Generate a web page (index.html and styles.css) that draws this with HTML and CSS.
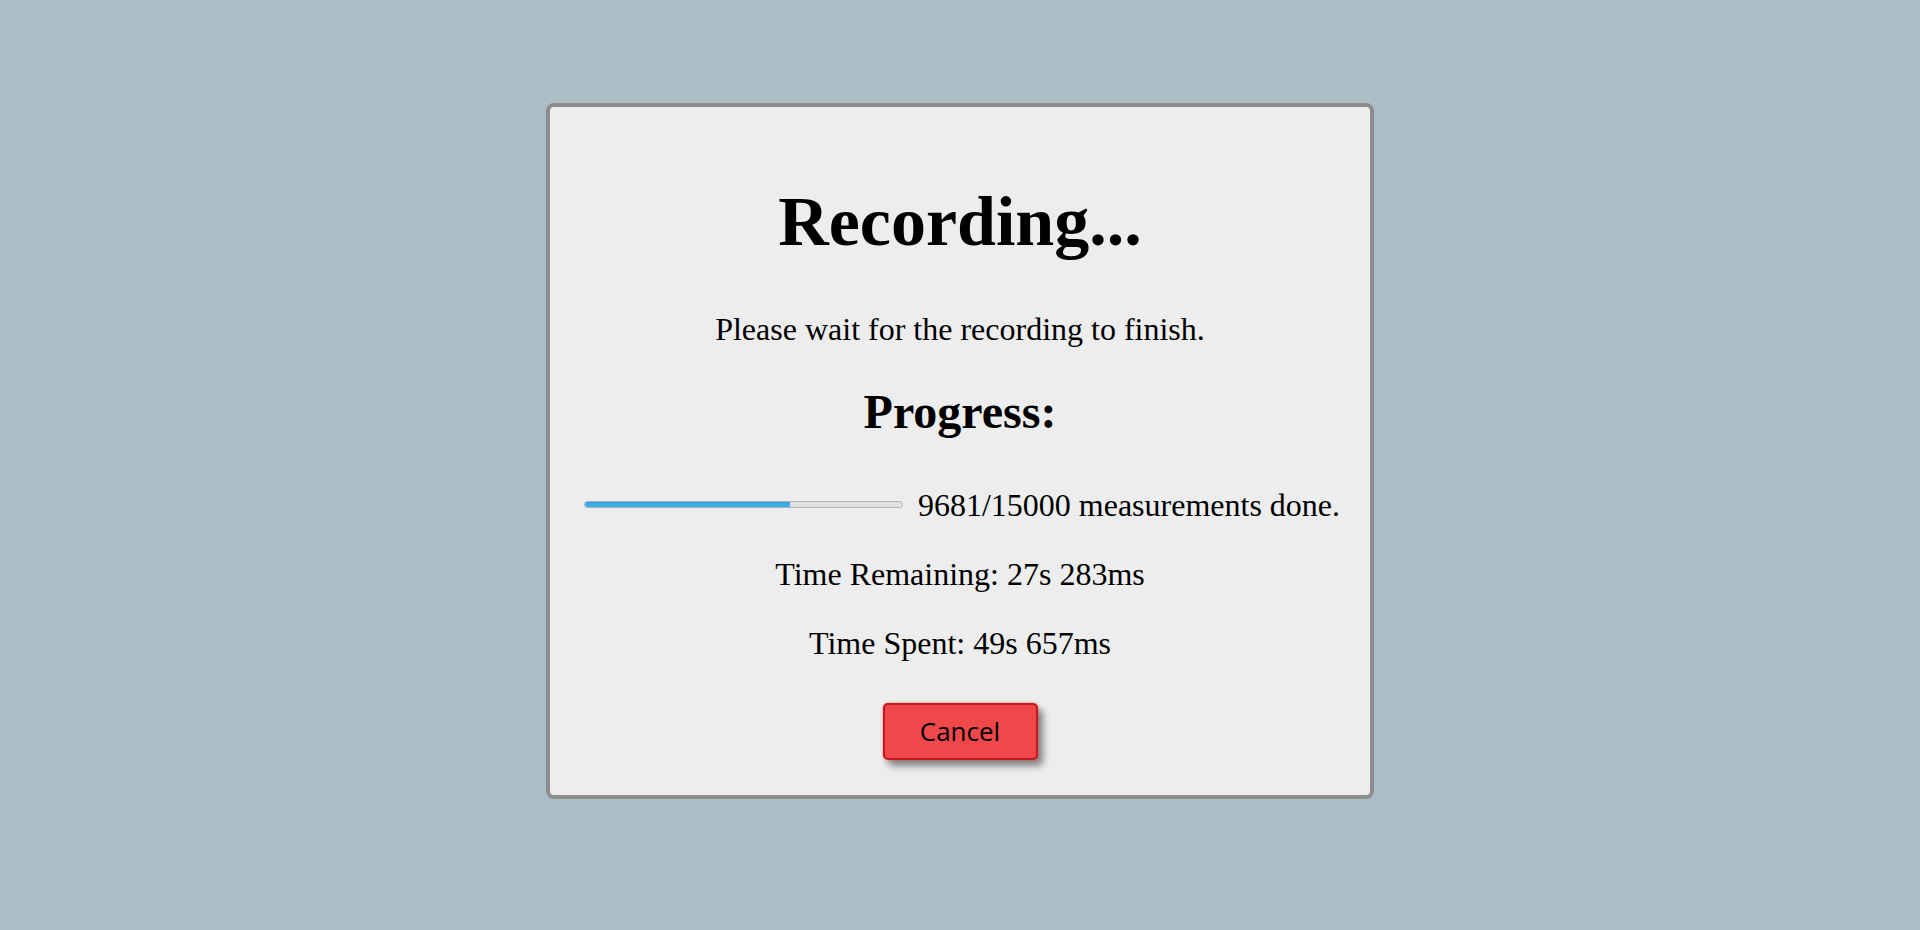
FILE: index.html
```html
<!DOCTYPE html>
<html lang="en">
<head>
<meta charset="utf-8">
<title>Recording</title>
<link rel="stylesheet" href="styles.css">
</head>
<body>
<main class="dialog">
  <h1 class="title">Recording...</h1>
  <p class="line wait">Please wait for the recording to finish.</p>
  <h2 class="subtitle">Progress:</h2>
  <div class="progress-row">
    <div class="bar"><div class="bar-fill" style="width: 64.54%"></div></div>
    <span class="line">9681/15000 measurements done.</span>
  </div>
  <p class="line remaining">Time Remaining: 27s 283ms</p>
  <p class="line spent">Time Spent: 49s 657ms</p>
  <button class="cancel" type="button">Cancel</button>
</main>
</body>
</html>
```

FILE: styles.css
```css
html, body {
  margin: 0;
  padding: 0;
}
body {
  background: #abbec6;
  min-height: 930px;
  box-sizing: border-box;
  padding-top: 103px;
  font-family: "Liberation Serif", "Times New Roman", serif;
  color: #000;
}
.dialog {
  width: 828px;
  height: 696px;
  box-sizing: border-box;
  margin: 0 auto;
  background: #ededed;
  border: 4px solid #8c8c8c;
  border-radius: 8px;
  display: flex;
  flex-direction: column;
  align-items: center;
}
.title {
  margin: 75px 0 0;
  font-size: 70px;
  line-height: 1.15;
  font-weight: bold;
}
.line {
  font-size: 32px;
  line-height: 1.15;
  margin: 0;
}
.wait {
  margin-top: 48px;
}
.subtitle {
  margin: 37px 0 0;
  font-size: 48px;
  line-height: 1.15;
  font-weight: bold;
}
.progress-row {
  margin-top: 48px;
  padding-left: 4px;
  display: flex;
  align-items: center;
  gap: 15px;
}
.bar {
  width: 317px;
  height: 5px;
  border: 1px solid #b2b2ba;
  border-radius: 4px;
  background: #e2e2e6;
  overflow: hidden;
  position: relative;
  top: -1px;
}
.bar-fill {
  height: 100%;
  background: #3daee9;
  box-shadow: inset 0 1px 0 #2f9fd8;
}
.remaining {
  margin-top: 32px;
}
.spent {
  margin-top: 32px;
}
.cancel {
  margin-top: 41px;
  width: 155px;
  height: 57px;
  box-sizing: border-box;
  background: #ef474a;
  border: 2px solid #c4161b;
  border-radius: 5px;
  font-family: "Open Sans", "Noto Sans", sans-serif;
  font-size: 26px;
  color: #000;
  padding: 0;
  box-shadow: 0 0 3px rgba(239, 71, 74, 0.6), 5px 6px 7px rgba(0, 0, 0, 0.45);
  cursor: pointer;
}
```
